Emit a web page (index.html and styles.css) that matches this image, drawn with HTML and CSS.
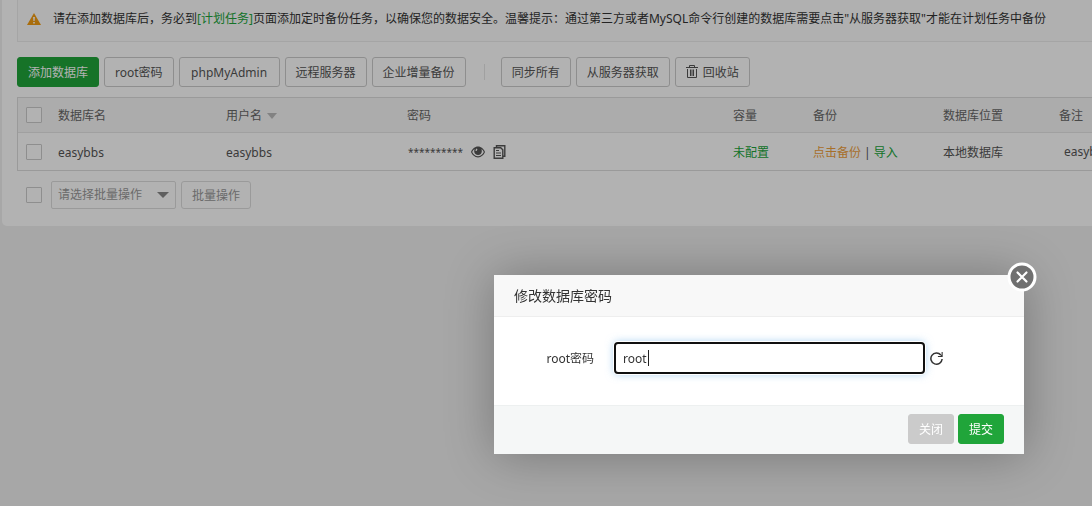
FILE: index.html
```html
<!DOCTYPE html>
<html lang="zh-CN">
<head>
<meta charset="utf-8">
<title>数据库</title>
<link rel="stylesheet" href="styles.css">
</head>
<body>
<main class="panel">
  <div class="notice">
    <svg class="notice-icon" viewBox="0 0 14 12" aria-hidden="true"><path fill="#f39c12" d="M7 0 L14 12 H0 Z"/><path fill="#fff" d="M6.100 4h1.800l-.3 4h-1.200zM6.200 9h1.600v1.500H6.200z"/></svg>
    <p class="notice-text">请在添加数据库后，务必到<a href="#" class="green">[计划任务]</a>页面添加定时备份任务，以确保您的数据安全。温馨提示：通过第三方或者MySQL命令行创建的数据库需要点击"从服务器获取"才能在计划任务中备份</p>
  </div>
  <div class="toolbar">
    <button class="btn btn-primary">添加数据库</button>
    <button class="btn">root密码</button>
    <button class="btn btn-wide">phpMyAdmin</button>
    <button class="btn">远程服务器</button>
    <button class="btn">企业增量备份</button>
    <span class="divider"></span>
    <button class="btn">同步所有</button>
    <button class="btn">从服务器获取</button>
    <button class="btn"><svg class="trash" viewBox="0 0 12 14" fill="none" stroke="currentColor" aria-hidden="true"><path d="M0 2.500h12M3.500 2.500v-2h5v2M1.500 4v8.500h9V4M4.500 4.500v6.500M6 4.500v6.500M7.500 4.500v6.500"/></svg>回收站</button>
  </div>
  <table class="grid">
    <thead>
      <tr>
        <th class="c-check"><input type="checkbox" class="check" aria-label="全选"></th>
        <th class="c-name">数据库名</th>
        <th class="c-user">用户名<span class="sort"></span></th>
        <th class="c-pass">密码</th>
        <th class="c-size">容量</th>
        <th class="c-backup">备份</th>
        <th class="c-place">数据库位置</th>
        <th class="c-note">备注</th>
      </tr>
    </thead>
    <tbody>
      <tr>
        <td class="c-check"><input type="checkbox" class="check" aria-label="选择 easybbs"></td>
        <td>easybbs</td>
        <td>easybbs</td>
        <td class="c-secret">
          <div class="secret">
            <span class="stars">**********</span>
            <button class="icon-btn" aria-label="显示密码"><svg class="eye" viewBox="0 0 13 11" aria-hidden="true"><path fill="currentColor" fill-rule="evenodd" d="M6.5 0.5C3.5 0.5 1.2 2.8 0 5.5c1.2 2.9 3.5 5 6.5 5s5.300-2.100 6.500-5C11.800 2.800 9.500.5 6.500.5ZM3.300 2.800C2.700 4.600 2.900 6.300 4.100 7.400 5.500 8.600 7.700 8.600 9 7.400c1.100-1.100 1.300-2.800.7-4.600 1 .6 1.700 1.600 2.200 2.700C10.800 7.900 8.900 9.400 6.500 9.400S2.200 7.900 1.100 5.500c.5-1.100 1.200-2.100 2.200-2.700ZM5.200 2.200C4.400 2.800 4.100 3.700 4.300 4.600h1.100C5.300 3.900 5.500 3.400 6.100 2.900Z"/></svg></button>
            <button class="icon-btn" aria-label="复制密码"><svg class="copy" viewBox="0 0 12 14" fill="none" stroke="currentColor" aria-hidden="true"><path stroke-width="1.400" d="M3 2.700V.7h8.300v10.500H9.500M.7 2.700h6.500l2.100 2.100v8.500H.7Z"/><path d="M2.500 5.500h3M2.500 8h5M2.500 10.500h5"/></svg></button>
          </div>
        </td>
        <td><a href="#" class="green">未配置</a></td>
        <td><div class="actions"><a href="#" class="orange">点击备份</a><span>|</span><a href="#" class="green">导入</a></div></td>
        <td>本地数据库</td>
        <td class="note">easybbs</td>
      </tr>
    </tbody>
  </table>
  <div class="batch">
    <input type="checkbox" class="check" aria-label="选择全部">
    <select class="batch-select" aria-label="批量操作"><option>请选择批量操作</option></select>
    <button class="btn btn-muted">批量操作</button>
  </div>
</main>
<div class="shade"></div>
<section class="dialog" role="dialog" aria-labelledby="dialog-title">
  <button class="dialog-x" aria-label="关闭窗口"><svg viewBox="0 0 30 30" aria-hidden="true"><circle cx="15" cy="15" r="13" fill="#707070" stroke="#fff" stroke-width="3"/><path d="M10.500 10.500l9 9M19.500 10.500l-9 9" stroke="#fff" stroke-width="2.200" stroke-linecap="round"/></svg></button>
  <h2 class="dialog-title" id="dialog-title">修改数据库密码</h2>
  <div class="dialog-body">
    <label class="label" for="root-pass">root密码</label>
    <input class="field" id="root-pass" type="text" value="root">
    <button class="icon-btn" aria-label="随机密码"><svg class="refresh" viewBox="0 0 12 12" fill="none" stroke="currentColor" aria-hidden="true"><path stroke-width="1.400" d="M10 2.700A5.200 5.200 0 1 0 11.200 6.500"/><path fill="currentColor" stroke="none" d="M11.700 0v4.700H7.300V3.700h2.200L10.700 2.500V0Z"/></svg></button>
  </div>
  <footer class="dialog-foot">
    <button class="btn btn-close">关闭</button>
    <button class="btn btn-primary">提交</button>
  </footer>
</section>
</body>
</html>
```
FILE: styles.css
```css
* { box-sizing: border-box; }

body {
  margin: 0;
  min-height: 100vh;
  overflow: hidden;
  background: #f0f0f0;
  color: #555;
  font: 12px/18px "Noto Sans", "Noto Sans CJK SC", sans-serif;
}

button, input, select { font: inherit; color: inherit; }
a { text-decoration: none; }
.green { color: #20a53a; }
.orange { color: #f0a03c; }

.panel {
  margin-left: 2px;
  padding: 0 0 17px 15px;
  overflow: hidden;
  background: #fff;
  border-radius: 0 0 0 5px;
}

.notice {
  display: flex;
  align-items: center;
  gap: 12px;
  padding: 10px 0 13px 9px;
  background: #fcfcfc;
  border: solid #ececec;
  border-width: 0 0 1px 1px;
}
.notice-icon { width: 14px; height: 12px; flex: none; }
.notice-text { margin: 0; color: #333; white-space: nowrap; }

.toolbar {
  display: flex;
  align-items: center;
  gap: 5px;
  margin: 15px 0 10px;
}
.btn {
  display: inline-flex;
  align-items: center;
  justify-content: center;
  gap: 5px;
  height: 30px;
  padding: 2px 10px 0;
  background: #fff;
  border: 1px solid #ccc;
  border-radius: 3px;
  white-space: nowrap;
}
.btn-primary { background: #20a53a; border-color: #20a53a; color: #fff; }
.btn-close { background: #cbcbcb; border-color: #cbcbcb; color: #fff; }
.btn-muted { height: 28px; color: #999; border-color: #ddd; }
.btn-wide { min-width: 101px; }
.divider { width: 1px; height: 16px; margin: 0 11px 0 13px; background: #e6e6e6; }
.trash { width: 12px; height: 14px; margin-bottom: 2px; }

.grid {
  width: 100%;
  table-layout: fixed;
  border-collapse: separate;
  border-spacing: 0;
  border: solid #ddd;
  border-width: 1px 0 0 1px;
}
.grid th, .grid td {
  padding: 2px 8px 0 0;
  border-bottom: 1px solid #ddd;
  text-align: left;
  font-weight: 400;
  white-space: nowrap;
}
.grid th { height: 35px; background: #f6f6f6; color: #666; border-color: #e6e6e6; }
.grid td { height: 38px; }
.grid .c-check { width: 40px; padding: 0 0 0 8px; }
.c-name { width: 168px; }
.c-user { width: 181px; }
.c-pass { width: 326px; }
.c-size { width: 80px; }
.c-backup { width: 130px; }
.c-place { width: 116px; }
.grid .c-secret { padding-top: 0; }
.grid .note { padding: 0 0 0 5px; }
.actions { display: flex; gap: 3px; }

.sort {
  display: inline-block;
  margin: 0 0 1px 5px;
  border: 5px solid transparent;
  border-top: 6px solid #bbb;
  border-bottom: 0;
  vertical-align: middle;
}

.check {
  appearance: none;
  display: block;
  flex: none;
  width: 16px;
  height: 16px;
  margin: 0;
  border: 1px solid #ccc;
  border-radius: 1px;
  background: #fff;
}

.secret { display: flex; align-items: center; gap: 8px; }
.stars { padding-left: 1px; font-size: 10px; }
.icon-btn { display: flex; padding: 0; border: 0; background: none; }
.eye { width: 14px; height: 12px; }
.copy { width: 13px; height: 14px; }
.refresh { width: 13px; height: 13px; }

.batch { display: flex; align-items: center; gap: 5px; margin-top: 10px; padding-left: 9px; }
.batch .check { margin-right: 4px; }
.batch-select {
  appearance: none;
  width: 125px;
  height: 28px;
  padding: 0 6px;
  color: #999;
  border: 1px solid #ddd;
  border-radius: 2px;
  background: #fff url("data:image/svg+xml,%3Csvg xmlns='http://www.w3.org/2000/svg' width='12' height='6'%3E%3Cpath fill='%23888' d='M0 0h12L6 6z'/%3E%3C/svg%3E") no-repeat right 6px center;
}

.shade { position: fixed; inset: 0; background: rgba(0, 0, 0, .3); }

.dialog {
  position: absolute;
  top: 275px;
  right: 68px;
  width: 530px;
  background: #fff;
  color: #333;
  border-radius: 2px;
  box-shadow: 1px 1px 50px rgba(0, 0, 0, .3);
}
.dialog-x {
  position: absolute;
  top: -13px;
  right: -13px;
  width: 30px;
  height: 30px;
  padding: 0;
  border: 0;
  background: none;
}
.dialog-x svg { display: block; }
.dialog-title {
  margin: 0;
  padding: 0 20px;
  font-size: 14px;
  font-weight: 400;
  line-height: 41px;
  background: #f8f8f8;
  border-bottom: 1px solid #eee;
}
.dialog-body { display: flex; align-items: center; padding: 25px 81px 31px 20px; }
.label { flex: none; width: 80px; margin-right: 20px; padding-top: 2px; text-align: right; }
.field {
  flex: 1;
  min-width: 0;
  height: 32px;
  margin-right: 5px;
  padding: 0 7px;
  border: 2px solid #101010;
  border-radius: 4px;
  outline: 0;
  background: linear-gradient(#222, #222) 32px center / 1px 16px no-repeat #fff;
  box-shadow: 0 0 0 1px #fff, 0 0 8px rgba(102, 175, 233, .6);
}
.dialog-foot {
  display: flex;
  justify-content: flex-end;
  gap: 4px;
  padding: 8px 20px 10px;
  background: #f5f7f7;
  border-top: 1px solid #edf0f0;
}
```
